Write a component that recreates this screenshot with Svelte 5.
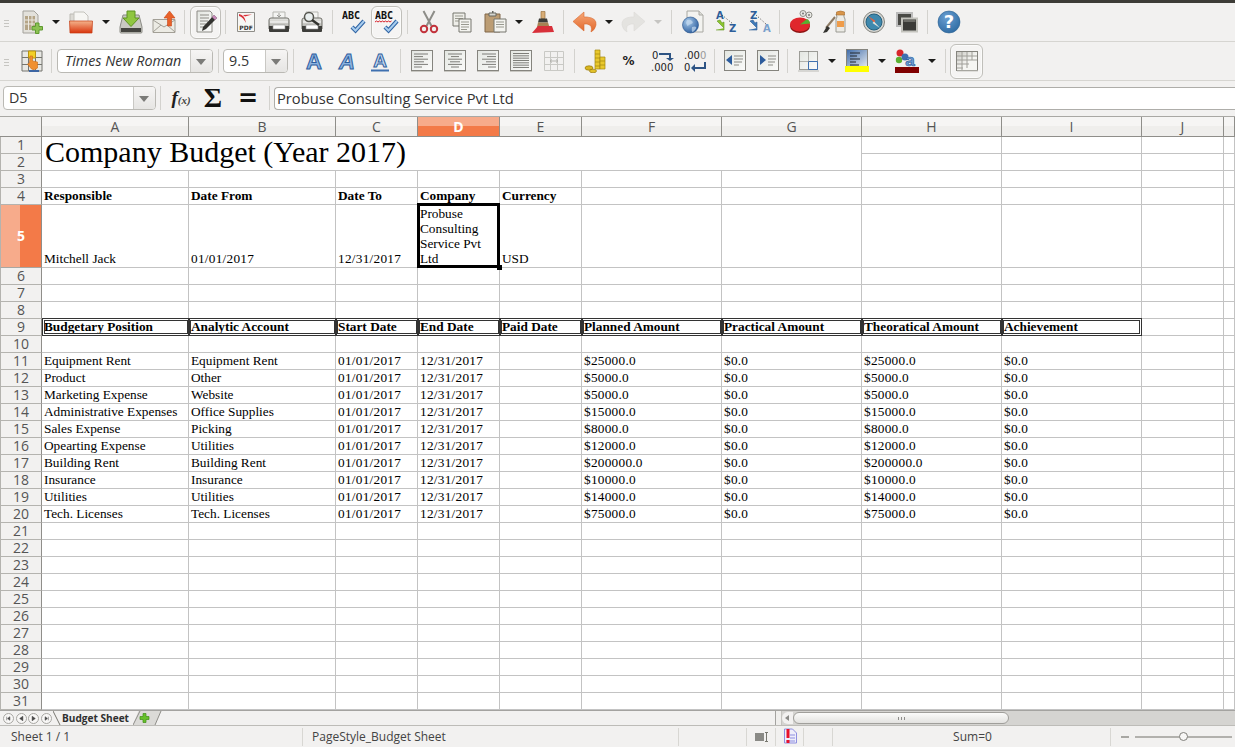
<script>
  const columns = ['A', 'B', 'C', 'D', 'E', 'F', 'G', 'H', 'I', 'J', ''];
  const rowCount = 31;

  const budget = [
    ['Equipment Rent', 'Equipment Rent', '$25000.0', '$25000.0'],
    ['Product', 'Other', '$5000.0', '$5000.0'],
    ['Marketing Expense', 'Website', '$5000.0', '$5000.0'],
    ['Administrative Expenses', 'Office Supplies', '$15000.0', '$15000.0'],
    ['Sales Expense', 'Picking', '$8000.0', '$8000.0'],
    ['Opearting Expense', 'Utilities', '$12000.0', '$12000.0'],
    ['Building Rent', 'Building Rent', '$200000.0', '$200000.0'],
    ['Insurance', 'Insurance', '$10000.0', '$10000.0'],
    ['Utilities', 'Utilities', '$14000.0', '$14000.0'],
    ['Tech. Licenses', 'Tech. Licenses', '$75000.0', '$75000.0']
  ];

  const cells = {
    4: ['Responsible', 'Date From', 'Date To', 'Company', 'Currency'],
    5: ['Mitchell Jack', '01/01/2017', '12/31/2017', 'Probuse Consulting Service Pvt Ltd', 'USD'],
    9: ['Budgetary Position', 'Analytic Account', 'Start Date', 'End Date', 'Paid Date', 'Planned Amount', 'Practical Amount', 'Theoratical Amount', 'Achievement']
  };
  budget.forEach((b, i) => {
    cells[11 + i] = [b[0], b[1], '01/01/2017', '12/31/2017', '', b[2], '$0.0', b[3], '$0.0'];
  });

  const rows = Array.from({ length: rowCount }, (_, i) => i + 1);

  // digits are hinted wider in the original, so numeric cells get a little tracking
  const isNumeric = (v) => /^[$\d][\d/.]*$/.test(v ?? '');

  const navIcons = ['M6.500 2.500v4l-2.500-2zM3 2.500v4', 'M6.500 2l-3.500 2.500 3.500 2.500z', 'M3.500 2l3.500 2.500-3.500 2.500z', 'M3.500 2.500v4l2.500-2zM7 2.500v4'];

  const alignLeft = [[4, 14], [4, 9], [4, 14], [4, 10], [4, 14], [4, 8]];
  const alignCenter = [[5, 14], [8, 8], [5, 14], [7, 10], [5, 14], [8, 8]];
  const alignRight = [[6, 14], [11, 9], [6, 14], [10, 10], [6, 14], [12, 8]];
  const alignFull = [[4, 16], [4, 16], [4, 16], [4, 16], [4, 16], [4, 16], [4, 16]];
</script>

{#snippet alignIcon(lines)}
  <svg width="24" height="24" viewBox="0 0 24 24">
    <rect x="1.500" y="1.500" width="21" height="20" fill="url(#pane)" stroke="#85847e" />
    <path d="M1 22.500h22" stroke="#c9c8c3" />
    {#each lines as l, i}
      <path d="M{l[0]} {lines.length > 6 ? 4.5 + i * 2.33 : 5 + i * 2.6}h{l[1]}" stroke="#7d7d78" />
    {/each}
  </svg>
{/snippet}

{#snippet printer()}
  <path d="M6 2h12v7H6z" fill="#f4f4f2" stroke="#b5b5b0" />
  <path d="M12 3v3M10 5l2 2 2-2" stroke="#9c9c98" fill="none" />
  <path d="M2 10q0-2 2-2h16q2 0 2 2v9H2z" fill="url(#metal)" stroke="#6f6f68" />
  <path d="M3 12h18" stroke="#fff" />
  <path d="M2 16h20v5q0 1-1 1H3q-1 0-1-1z" fill="#3d3d3a" />
  <path d="M6 15h12v4H6z" fill="#fff" stroke="#999" stroke-width=".6" />
{/snippet}

{#snippet abcMark(under)}
  <svg width="24" height="24" viewBox="0 0 24 24">
    <text x="0" y="9" class="abc">ABC</text>
    {#if under}
      <path d="M0 12l1.500-1 1.500 1 1.500-1 1.500 1 1.500-1 1.500 1 1.500-1 1.500 1 1.500-1 1.500 1 1.500-1" stroke="#d8202a" fill="none" />
    {/if}
    <path d="M10 17l3.500 3.500L22 11" stroke="#2f64a4" stroke-width="4.200" fill="none" />
    <path d="M10 17l3.500 3.500L22 11" stroke="#a9cdee" stroke-width="2" fill="none" />
  </svg>
{/snippet}

<svg class="defs" width="0" height="0" aria-hidden="true">
  <defs>
    <linearGradient id="pane" x1="0" y1="0" x2="1" y2="1"><stop offset="0" stop-color="#e3e6e1" /><stop offset="1" stop-color="#fbfbfa" /></linearGradient>
    <linearGradient id="metal" x1="0" y1="0" x2="0" y2="1"><stop offset="0" stop-color="#e6e6e3" /><stop offset="1" stop-color="#a9a9a4" /></linearGradient>
    <linearGradient id="folder" x1="0" y1="0" x2="0" y2="1"><stop offset="0" stop-color="#f4b48c" /><stop offset="1" stop-color="#d9330b" /></linearGradient>
    <linearGradient id="undo" x1="0" y1="0" x2="0" y2="1"><stop offset="0" stop-color="#f6a878" /><stop offset="1" stop-color="#e2672a" /></linearGradient>
    <linearGradient id="blueSheet" x1="0" y1="0" x2="1" y2="1"><stop offset="0" stop-color="#3d6aa8" /><stop offset="1" stop-color="#e8edf2" /></linearGradient>
    <linearGradient id="freeze" x1="0" y1="0" x2="1" y2="1"><stop offset="0" stop-color="#c9c8c2" /><stop offset=".55" stop-color="#f6f6f3" /></linearGradient>
    <radialGradient id="globe" cx=".35" cy=".3" r=".8"><stop offset="0" stop-color="#a9cbea" /><stop offset="1" stop-color="#24579a" /></radialGradient>
    <radialGradient id="help" cx=".4" cy=".3" r=".8"><stop offset="0" stop-color="#6a9fd2" /><stop offset="1" stop-color="#2a679f" /></radialGradient>
  </defs>
</svg>

<div class="app">
  <div class="topstrip"></div>

  <div class="toolbar">
    <span class="grip"></span>
    <span class="b">
      <svg width="24" height="24" viewBox="0 0 24 24">
        <path d="M3 1h11l4 4v18H3z" fill="#e3e1db" stroke="#a3a19b" />
        <path d="M5 6h10v14H5z" fill="#b5a587" />
        <path d="M5 10h10M5 14h10M8.500 6v14M12 6v14" stroke="#ece9e2" />
        <path d="M15.500 13h3.500v3.500h3.500V20H19v3.500h-3.500V20H12v-3.500h3.500z" fill="#8cc152" stroke="#5f9a30" />
      </svg>
    </span>
    <span class="arr w16"></span>
    <span class="b">
      <svg width="24" height="24" viewBox="0 0 24 24">
        <path d="M1 4h7l2 2v6H1z" fill="#dcdad4" stroke="#bcbab4" />
        <path d="M5 2h10l4 4v8H5z" fill="#f7f6f3" stroke="#c4c2bc" />
        <path d="M.5 11h23l-.5 12H1z" fill="url(#folder)" stroke="#c43c14" stroke-width=".7" />
      </svg>
    </span>
    <span class="arr w17"></span>
    <span class="b">
      <svg width="24" height="24" viewBox="0 0 24 24">
        <path d="M4 5h16l3 12v5q0 1-1 1H2q-1 0-1-1v-5z" fill="#c9c9c2" stroke="#8b8b85" />
        <path d="M2 18h20v4H2z" fill="#454541" />
        <path d="M8 1h8v7h4l-8 8.500L4 8h4z" fill="#8fc640" stroke="#5d9220" />
      </svg>
    </span>
    <span class="b">
      <svg width="24" height="24" viewBox="0 0 24 24">
        <path d="M1 9.500h22v13H1z" fill="#ecebe4" stroke="#a29f96" />
        <path d="M1 10l11 7 11-7M1 22l8-7M23 22l-8-7" stroke="#a29f96" fill="none" />
        <path d="M17.500 1l5.500 7h-3.500v8h-4V8H12z" fill="#e8622a" stroke="#c9471a" stroke-width=".6" />
      </svg>
    </span>
    <span class="sep w9"></span>
    <span class="b on">
      <svg width="24" height="24" viewBox="0 0 24 24">
        <path d="M3 1h13l2 2v19H3z" fill="url(#pane)" stroke="#8c8b85" />
        <path d="M6 5h9M6 8h9M6 11h8M6 14h6M6 17h4" stroke="#8c8b85" />
        <path d="M20 5l3 3-11 11-4 2 1-4z" fill="#33332f" />
        <path d="M20 5l3 3-2 2-3-3z" fill="#c788b8" />
      </svg>
    </span>
    <span class="sep w7"></span>
    <span class="b">
      <svg width="24" height="24" viewBox="0 0 24 24">
        <path d="M3.500 2.500h17v19h-17z" fill="#f7f7f5" stroke="#8e8d88" />
        <path d="M5 4q6 1 7 9-3-6-7-7zM9 5l9-.5-7 2z" fill="#d9323a" />
        <text x="12" y="19.500" class="pdf" text-anchor="middle">PDF</text>
      </svg>
    </span>
    <span class="b"><svg width="24" height="24" viewBox="0 0 24 24">{@render printer()}</svg></span>
    <span class="b">
      <svg width="24" height="24" viewBox="0 0 24 24">
        {@render printer()}
        <circle cx="9" cy="7" r="4.500" fill="#e9eeee" stroke="#55554f" stroke-width="1.500" />
        <path d="M12 10l7 5" stroke="#33332f" stroke-width="2.500" />
      </svg>
    </span>
    <span class="sep w9"></span>
    <span class="b">{@render abcMark(false)}</span>
    <span class="b on">{@render abcMark(true)}</span>
    <span class="sep w9"></span>
    <span class="b">
      <svg width="24" height="24" viewBox="0 0 24 24">
        <path d="M6.500 1l8 15M17.500 1l-8 15" stroke="#8d8d88" stroke-width="2" />
        <circle cx="7" cy="19" r="3.200" fill="none" stroke="#c2333c" stroke-width="2" />
        <circle cx="17" cy="19" r="3.200" fill="none" stroke="#c2333c" stroke-width="2" />
      </svg>
    </span>
    <span class="b">
      <svg width="24" height="24" viewBox="0 0 24 24">
        <path d="M3 3h12v13H3z" fill="#eeeee9" stroke="#77776f" />
        <path d="M5 6h8M5 8.500h8M5 11h8" stroke="#99998f" />
        <path d="M9 9h12v13H9z" fill="#f4f4f0" stroke="#77776f" />
        <path d="M11 12h8M11 14.500h8M11 17h8M11 19.500h6" stroke="#99998f" />
      </svg>
    </span>
    <span class="b">
      <svg width="24" height="24" viewBox="0 0 24 24">
        <path d="M2 4h15v18H2z" fill="#bc9d74" stroke="#806648" />
        <path d="M6 3h7v3H6z" fill="#d6d6d0" stroke="#66665f" />
        <path d="M9 1h1.500v2H9z" fill="#66665f" />
        <path d="M11 9h12v13H11z" fill="#f4f4f0" stroke="#77776f" />
        <path d="M13 12h8M13 14.500h8M13 17h8" stroke="#99998f" />
      </svg>
    </span>
    <span class="arr w15"></span>
    <span class="b">
      <svg width="24" height="24" viewBox="0 0 24 24">
        <path d="M10 1.500h4v7h-4z" fill="#d8ad76" stroke="#9b7444" stroke-width=".7" />
        <path d="M8 8.500h8l1 4H7z" fill="#3c3c38" />
        <path d="M7 12.500h10l3 9H5z" fill="#a78253" />
        <path d="M1 23l6-7h14l2 6z" fill="#d8303a" />
      </svg>
    </span>
    <span class="sep w9"></span>
    <span class="b">
      <svg width="24" height="24" viewBox="0 0 24 24">
        <path d="M0 11.500L11 2v5h3q10 1 9 8-1 5-5 7 2-7-4-8h-3v7z" fill="url(#undo)" stroke="#d96a30" stroke-width=".6" />
      </svg>
    </span>
    <span class="arr w15"></span>
    <span class="b">
      <svg width="24" height="24" viewBox="0 0 24 24">
        <path d="M24 11.500L13 2v5h-3Q0 8 1 15q1 5 5 7-2-7 4-8h3v7z" fill="#e4e3e0" stroke="#dbdad7" stroke-width=".6" />
      </svg>
    </span>
    <span class="arr w18 off"></span>
    <span class="sep w9"></span>
    <span class="b">
      <svg width="24" height="24" viewBox="0 0 24 24">
        <path d="M6 1h12l4 4v17H6z" fill="#f3f3f0" stroke="#a8a8a2" />
        <path d="M18 1v4h4" fill="#dcdcd7" stroke="#a8a8a2" />
        <circle cx="9.500" cy="15" r="8" fill="url(#globe)" stroke="#27538b" stroke-width=".6" />
        <path d="M6 10q3-1 5 1t-1 3-3 2-2-3zM11 17q3-1 4 0t-2 4-2-4z" fill="#c7dcef" opacity=".7" />
      </svg>
    </span>
    <span class="b">
      <svg width="24" height="24" viewBox="0 0 24 24">
        <text x="2" y="9" class="sortb">A</text>
        <text x="15" y="22" class="sortb">Z</text>
        <path d="M8 5l11 9" stroke="#3e3e3a" stroke-dasharray="1 2" />
        <path d="M3 11l7 7v-6l-2 1-2-3zM2 20h8v-2" fill="#8cc52f" stroke="#5f9320" stroke-width=".6" />
      </svg>
    </span>
    <span class="b">
      <svg width="24" height="24" viewBox="0 0 24 24">
        <text x="3" y="9" class="sortb">Z</text>
        <text x="16" y="22" class="sortb light">A</text>
        <path d="M9 5l10 9" stroke="#3e3e3a" stroke-dasharray="1 2" />
        <path d="M3 11l7 7v-6l-2 1-2-3zM2 20h8v-2" fill="#3f7ab8" stroke="#2b5c94" stroke-width=".6" />
      </svg>
    </span>
    <span class="sep w9"></span>
    <span class="b">
      <svg width="24" height="24" viewBox="0 0 24 24">
        <ellipse cx="11" cy="16" rx="10" ry="7" fill="#8e1414" />
        <ellipse cx="11" cy="14.500" rx="10" ry="7" fill="#e0262c" />
        <path d="M11 14.500l10-1q0-3-3-4.500z" fill="#58b030" />
        <circle cx="14" cy="3.500" r="3" fill="#e8e8e4" stroke="#8e8e88" />
        <circle cx="20" cy="5" r="3" fill="#e8e8e4" stroke="#8e8e88" />
        <circle cx="14" cy="3.500" r="1" fill="#777" /><circle cx="20" cy="5" r="1" fill="#777" />
      </svg>
    </span>
    <span class="b">
      <svg width="24" height="24" viewBox="0 0 24 24">
        <path d="M14 4h8v3l1 2v13h-9V9l1-2z" fill="#ecebe6" stroke="#9a9a93" />
        <path d="M14.500 2q4-2 8 0v3h-8z" fill="#d8954a" stroke="#a66b2c" stroke-width=".6" />
        <path d="M15 11h7v6h-7z" fill="#ef9c4a" />
        <path d="M13 7L4 18" stroke="#8c7a63" stroke-width="2" />
        <path d="M5 16l3 2-3 4-4 1z" fill="#33332f" />
      </svg>
    </span>
    <span class="sep w7"></span>
    <span class="b">
      <svg width="24" height="24" viewBox="0 0 24 24">
        <circle cx="12" cy="12" r="10.500" fill="#d4d4d0" stroke="#85857f" />
        <circle cx="12" cy="12" r="8" fill="#3f88ad" stroke="#25607e" />
        <path d="M6 6l7.500 5-1.500 1.500z" fill="#e95f3a" />
        <path d="M18 18l-7.500-5 1.500-1.500z" fill="#e3e3de" />
      </svg>
    </span>
    <span class="b">
      <svg width="24" height="24" viewBox="0 0 24 24">
        <path d="M2 3h15v13H2z" fill="#4a4a46" stroke="#bbb" stroke-width="2" />
        <path d="M7 8.500h15v13H7z" fill="#3b3b38" stroke="#c4c4be" stroke-width="2" />
        <path d="M8.500 10h12v2H8.500z" fill="#6d6d68" />
      </svg>
    </span>
    <span class="sep w9"></span>
    <span class="b">
      <svg width="24" height="24" viewBox="0 0 24 24">
        <circle cx="12" cy="12" r="11" fill="url(#help)" stroke="#2b6292" stroke-width=".6" />
        <text x="12" y="18" class="helpq" text-anchor="middle">?</text>
      </svg>
    </span>
  </div>

  <div class="toolbar second">
    <span class="grip"></span>
    <span class="b">
      <svg width="24" height="24" viewBox="0 0 24 24">
        <path d="M2 2h20v20H2z" fill="#e8e8e4" stroke="#75756f" />
        <path d="M2 8.500h20M2 15.500h20M8.500 2v20M15.500 2v20" stroke="#75756f" />
        <path d="M8.500 2h7v7h-7z" fill="#f2cf27" stroke="#b8930f" />
        <path d="M10 7h2.500v5l5 1v6q-3 3-6 1l-4-5 2-1z" fill="#f09030" stroke="#cc6c12" stroke-width=".6" />
        <path d="M9 21h10v2H9z" fill="#3d66a3" />
      </svg>
    </span>
    <span class="sep w7"></span>
    <span class="combo font">
      <span class="combo-value">Times New Roman</span>
      <span class="combo-btn"></span>
    </span>
    <span class="sep w6"></span>
    <span class="combo size">
      <span class="combo-value plain">9.5</span>
      <span class="combo-btn"></span>
    </span>
    <span class="sep w7"></span>
    <span class="b"><svg width="24" height="24" viewBox="0 0 24 24"><text x="12" y="20" class="fa" text-anchor="middle">A</text></svg></span>
    <span class="b"><svg width="24" height="24" viewBox="0 0 24 24"><text x="12" y="20" class="fa it" text-anchor="middle">A</text></svg></span>
    <span class="b">
      <svg width="24" height="24" viewBox="0 0 24 24">
        <text x="12" y="18" class="fa thin" text-anchor="middle">A</text>
        <path d="M3 21.500h18" stroke="#3f70b0" stroke-width="2" />
      </svg>
    </span>
    <span class="sep w9"></span>
    <span class="b">{@render alignIcon(alignLeft)}</span>
    <span class="b">{@render alignIcon(alignCenter)}</span>
    <span class="b">{@render alignIcon(alignRight)}</span>
    <span class="b">{@render alignIcon(alignFull)}</span>
    <span class="b">
      <svg width="24" height="24" viewBox="0 0 24 24">
        <path d="M2.500 2.500h19v19h-19z" fill="#f2f1f0" stroke="#c9c9c5" />
        <path d="M2.500 8.500h19M2.500 15.500h19M8.500 2.500v19M15.500 2.500v19" stroke="#c9c9c5" />
        <path d="M8 12h8M8 12l2-1.500M8 12l2 1.500M16 12l-2-1.500M16 12l-2 1.500" stroke="#b5b5b0" fill="none" />
      </svg>
    </span>
    <span class="sep w9"></span>
    <span class="b">
      <svg width="24" height="24" viewBox="0 0 24 24">
        <ellipse cx="5" cy="19" rx="4" ry="2.200" fill="#d9b61e" stroke="#96790f" stroke-width=".7" />
        <ellipse cx="9" cy="22" rx="3.500" ry="1.800" fill="#e2c12a" stroke="#96790f" stroke-width=".7" />
        <path d="M11 1h5v19h-5z" fill="#e9c82d" stroke="#a3860f" stroke-width=".7" />
        <path d="M16 8h5v12h-5z" fill="#e9c82d" stroke="#a3860f" stroke-width=".7" />
        <path d="M11 5h5M11 9h5M11 13h5M11 17h5M16 12h5M16 16h5" stroke="#a3860f" stroke-width=".7" />
      </svg>
    </span>
    <span class="b"><span class="pct">%</span></span>
    <span class="b">
      <svg width="24" height="24" viewBox="0 0 24 24">
        <text x="2" y="10" class="num">0</text>
        <text x="1" y="22" class="num">.000</text>
        <path d="M9 5h11v5" stroke="#2e5484" stroke-width="2" fill="none" />
        <path d="M16 9h8l-4 3z" fill="#2e5484" />
      </svg>
    </span>
    <span class="b">
      <svg width="24" height="24" viewBox="0 0 24 24">
        <text x="1" y="10" class="num">.00<tspan fill="#999">0</tspan></text>
        <text x="1" y="22" class="num">0</text>
        <path d="M22 13v6H11" stroke="#2e5484" stroke-width="2" fill="none" />
        <path d="M12 15v8l-4-4z" fill="#2e5484" />
      </svg>
    </span>
    <span class="sep w7"></span>
    <span class="b">
      <svg width="24" height="24" viewBox="0 0 24 24">
        <rect x="1.500" y="1.500" width="21" height="20" fill="url(#pane)" stroke="#85847e" />
        <path d="M9 6L3 11l6 5z" fill="#2c5c9c" />
        <path d="M11 7h9M11 10h9M11 13h8M11 16h5" stroke="#8b8b85" />
      </svg>
    </span>
    <span class="b">
      <svg width="24" height="24" viewBox="0 0 24 24">
        <rect x="1.500" y="1.500" width="21" height="20" fill="url(#pane)" stroke="#85847e" />
        <path d="M4 6l6 5-6 5z" fill="#2c5c9c" />
        <path d="M12 7h8M12 10h8M12 13h7M12 16h5" stroke="#8b8b85" />
      </svg>
    </span>
    <span class="sep w7"></span>
    <span class="b">
      <svg width="24" height="24" viewBox="0 0 24 24">
        <rect x="3.500" y="2.500" width="18" height="18" fill="url(#pane)" stroke="#9c9c97" />
        <path d="M12.500 12.500h9v8h-9z" fill="none" stroke="#3f70b0" />
        <path d="M3.500 12.500h9M12.500 2.500v10" stroke="#75756f" stroke-dasharray="1 1" />
        <path d="M2 22h21" stroke="#bbbbb6" />
      </svg>
    </span>
    <span class="arr w16"></span>
    <span class="b">
      <svg width="24" height="24" viewBox="0 0 24 24">
        <rect x="1.500" y="0.500" width="21" height="18" fill="url(#blueSheet)" stroke="#85847e" />
        <path d="M5 4h10M5 7h7M5 10h10M5 13h6M5 16h9" stroke="#22262c" />
        <path d="M0 17h24v6H0z" fill="#ffff00" />
      </svg>
    </span>
    <span class="arr w17"></span>
    <span class="b">
      <svg width="24" height="24" viewBox="0 0 24 24">
        <circle cx="5" cy="4" r="3.500" fill="#d8262c" />
        <circle cx="4" cy="11" r="3.200" fill="#5cb030" />
        <circle cx="10" cy="8" r="3.500" fill="#3f70b0" />
        <text x="15" y="17" class="fc" text-anchor="middle">a</text>
        <path d="M0 18h24v6H0z" fill="#800000" />
      </svg>
    </span>
    <span class="arr w17"></span>
    <span class="sep w10"></span>
    <span class="b on big">
      <svg width="24" height="24" viewBox="0 0 24 24">
        <rect x="1.500" y="2.500" width="21" height="19" fill="url(#freeze)" stroke="#85847e" />
        <path d="M2 7h20M2 11h20M2 15h12M2 19h6M7 3v18M12 3v16M17 3v8" stroke="#a09f99" />
        <path d="M2 22h21" stroke="#c9c8c3" />
      </svg>
    </span>
  </div>

  <div class="formula">
    <span class="combo name">
      <span class="combo-value plain">D5</span>
      <span class="combo-btn"></span>
    </span>
    <span class="sep w9"></span>
    <span class="fx"><i>f</i><small>(x)</small></span>
    <span class="sigma">Σ</span>
    <span class="equals">=</span>
    <span class="sep w9"></span>
    <div class="input">Probuse Consulting Service Pvt Ltd</div>
  </div>

  <div class="sheet">
    <div class="corner"></div>
    {#each columns as c}
      <div class="colhead" class:active={c === 'D'}>{c}</div>
    {/each}

    {#each rows as r}
      <div class="rowhead" class:active={r === 5}>{r}</div>
      {#if r === 1}
        <div class="cell merged">Company Budget (Year 2017)</div>
      {/if}
      {#each columns as c, i}
        {#if !(r <= 2 && i < 7)}
          <div
            class="cell"
            class:head={r === 4 || r === 9}
            class:boxed={r === 9 && i < 9}
            class:first={i === 0}
            class:last={i === 8}
            class:wrap={r === 5 && i === 3}
            class:selected={r === 5 && i === 3}
            class:numeric={isNumeric(cells[r]?.[i])}
          >{cells[r]?.[i] ?? ''}</div>
        {/if}
      {/each}
    {/each}
  </div>

  <div class="tabbar">
    <div class="tabnav">
      {#each navIcons as d}
        <span class="nav">
          <svg width="10" height="9" viewBox="0 0 10 9"><path {d} fill="#444" stroke="#444" stroke-width=".6" /></svg>
        </span>
      {/each}
    </div>
    <div class="tab">
      <svg class="slash" width="8" height="14" viewBox="0 0 8 14"><path d="M0 0l7 14" stroke="#77766f" fill="none" /></svg>
      <span>Budget Sheet</span>
    </div>
    <svg class="addtab" width="29" height="14" viewBox="0 0 29 14">
      <path d="M5.500 0H28l-6 14H0z" fill="#dbdad7" />
      <path d="M7 0L0 14M28 0l-6 14" stroke="#8e8d88" fill="none" />
      <path d="M10 2.500h3v3h3v3h-3v3h-3v-3H7v-3h3z" fill="#66c02a" stroke="#3f8e16" stroke-width=".7" />
    </svg>
    <div class="tabfill"></div>
    <div class="splitter"></div>
    <div class="hscroll">
      <span class="scroll-left"></span>
      <div class="thumb"><span></span></div>
    </div>
  </div>

  <div class="status">
    <div class="st st1">Sheet 1 / 1</div>
    <div class="st st2">PageStyle_Budget Sheet</div>
    <div class="st st3"></div>
    <div class="st st4">
      <svg width="14" height="12" viewBox="0 0 14 12">
        <path d="M0 2h9v8H0z" fill="#8a8a86" />
        <path d="M10 1.500h3M11.500 1.500v9M10 10.500h3" stroke="#77776f" fill="none" />
      </svg>
    </div>
    <div class="st st5">
      <svg width="15" height="17" viewBox="0 0 15 17">
        <path d="M1.500 1h8l4 4v10h-12z" fill="#eeeefa" stroke="#8e8ee0" />
        <path d="M7 7h5M7 10h5M3 13h9" stroke="#8e8ee0" />
        <path d="M3.500 1h3v9h-3zM3.500 12h3v3h-3z" fill="#e8102a" />
      </svg>
    </div>
    <div class="st st6"></div>
    <div class="st st7">Sum=0</div>
    <div class="st st8">
      <span class="minus"></span>
      <span class="slider"><span class="knob"></span></span>
    </div>
  </div>
</div>

<style>
  :global(body) {
    margin: 0;
    background: #f2f1f0;
    overflow: hidden;
  }

  .defs {
    position: absolute;
  }

  .app {
    width: 1235px;
    height: 747px;
    display: flex;
    flex-direction: column;
    overflow: hidden;
    background: #f2f1f0;
    font-family: "Open Sans", "Noto Sans", sans-serif;
    color: #3c3c3c;
  }

  .topstrip {
    height: 3px;
    background: #3d3c37;
    flex: none;
  }

  .toolbar {
    height: 38px;
    flex: none;
    display: flex;
    align-items: center;
    padding-left: 15px;
    border-bottom: 1px solid #d6d5d1;
    position: relative;
  }

  .grip {
    position: absolute;
    left: 4px;
    top: 17px;
    width: 5px;
    height: 7px;
    background: repeating-linear-gradient(#c6c5c1 0 1px, transparent 1px 3px);
  }

  .b {
    width: 33px;
    height: 33px;
    flex: none;
    display: flex;
    align-items: center;
    justify-content: center;
    box-sizing: border-box;
  }

  .b svg {
    display: block;
  }

  .b.on {
    width: 31px;
    margin: 0 1px;
    border: 1px solid #c0bfba;
    border-radius: 6px;
    background: #f5f4f3;
    box-shadow: inset 0 0 0 1px #fbfbfa;
  }

  .b.on.big {
    width: 33px;
    height: 35px;
    margin: 0;
  }

  .arr {
    flex: none;
    height: 10px;
    position: relative;
  }

  .arr::after {
    content: "";
    position: absolute;
    left: 50%;
    top: 3px;
    margin-left: -4px;
    border: 4px solid transparent;
    border-top-color: #1c1c1a;
    border-bottom: 0;
  }

  .arr.off::after {
    border-top-color: #c6c5c2;
  }

  .w15 { width: 15px; }
  .w16 { width: 16px; }
  .w17 { width: 17px; }
  .w18 { width: 18px; }

  .sep {
    flex: none;
    height: 24px;
    display: flex;
    justify-content: center;
  }

  .sep::before {
    content: "";
    width: 1px;
    background: #d3d2ce;
  }

  .w6 { width: 6px; }
  .w7 { width: 7px; }
  .w9 { width: 9px; }
  .w10 { width: 10px; }

  .combo {
    flex: none;
    height: 24px;
    box-sizing: border-box;
    display: flex;
    background: #fff;
    border: 1px solid #bab9b4;
    border-radius: 4px;
    overflow: hidden;
  }

  .combo.font {
    width: 156px;
    margin: 0 2px;
  }

  .combo.size {
    width: 65px;
    margin: 0 2px;
  }

  .combo.name {
    width: 153px;
    margin-left: 3px;
  }

  .combo-value {
    flex: 1;
    padding-left: 7px;
    font-size: 14.300px;
    line-height: 22px;
    font-style: italic;
    color: #333;
    white-space: nowrap;
  }

  .combo-value.plain {
    font-style: normal;
    padding-left: 5px;
  }

  .combo-btn {
    width: 21px;
    flex: none;
    border-left: 1px solid #c9c8c4;
    background: linear-gradient(#f6f5f4, #e6e5e3);
    position: relative;
  }

  .combo-btn::after {
    content: "";
    position: absolute;
    left: 5px;
    top: 9px;
    border: 5px solid transparent;
    border-top: 6px solid #7b7b78;
    border-bottom: 0;
  }

  .formula {
    height: 35px;
    flex: none;
    display: flex;
    align-items: center;
    padding-bottom: 1px;
    box-sizing: border-box;
  }

  .fx {
    width: 28px;
    margin-left: 2px;
    text-align: center;
    font-family: "Liberation Serif", serif;
    color: #1e1e1e;
  }

  .fx i {
    font-size: 19px;
    font-weight: 700;
  }

  .fx small {
    font-size: 11px;
    font-style: italic;
    font-weight: 700;
    color: #444;
  }

  .sigma {
    width: 36px;
    text-align: center;
    font-family: "Liberation Serif", serif;
    font-size: 28px;
    line-height: 24px;
    font-weight: 700;
    color: #111;
  }

  .equals {
    width: 34px;
    text-align: center;
    font-family: "DejaVu Sans", sans-serif;
    font-size: 24px;
    line-height: 24px;
    font-weight: 700;
    color: #111;
  }

  .input {
    flex: 1;
    height: 23px;
    box-sizing: border-box;
    background: #fff;
    border: 1px solid #aeada9;
    border-right: 0;
    border-radius: 4px 0 0 4px;
    padding-left: 2px;
    font-size: 14.700px;
    line-height: 21px;
    color: #333;
  }

  .sheet {
    flex: none;
    height: 594px;
    display: grid;
    grid-template-columns: 42px 147px 147px 82px 82px 82px 140px 140px 140px 140px 82px 1fr;
    grid-template-rows: 20px repeat(4, 17px) 63px repeat(26, 17px);
    background: #fff;
    overflow: hidden;
    border-top: 1px solid #a9a8a4;
    box-sizing: border-box;
    font-family: "Liberation Serif", serif;
    font-size: 13.300px;
    color: #000;
  }

  .corner,
  .colhead,
  .rowhead {
    font-family: "Open Sans", "Noto Sans", sans-serif;
    font-size: 14px;
    color: #555;
    background: #f2f1f0;
    box-sizing: border-box;
    display: flex;
    align-items: center;
    justify-content: center;
    line-height: 1;
  }

  .corner {
    border-right: 1px solid #8f8e8a;
    border-bottom: 1px solid #8f8e8a;
  }

  .colhead {
    border-right: 1px solid #8f8e8a;
    border-bottom: 1px solid #8f8e8a;
    background: linear-gradient(#f6f5f4 0 50%, #efeeec 50%);
  }

  .colhead.active {
    background: linear-gradient(#f7ab8b 0 45%, #f37a48 45%);
    color: #fff;
    font-weight: 700;
  }

  .rowhead {
    border-right: 1px solid #8f8e8a;
    border-bottom: 1px solid #b4b3af;
    border-left: 1px solid #b4b3af;
  }

  .rowhead.active {
    background: linear-gradient(90deg, #f7ab8b 0 48%, #f37a48 48%);
    color: #fff;
    font-weight: 700;
    border-bottom-color: #a8a7a3;
  }

  .cell {
    box-sizing: border-box;
    border-right: 1px solid #c3c3c3;
    border-bottom: 1px solid #c3c3c3;
    padding: 0 2px 1px;
    display: flex;
    align-items: flex-end;
    line-height: 15px;
    white-space: nowrap;
    min-width: 0;
    position: relative;
  }

  .numeric {
    letter-spacing: 0.25px;
  }

  .merged {
    grid-column: 2 / span 7;
    grid-row: 2 / span 2;
    font-size: 30px;
    line-height: 32px;
    padding-left: 3px;
    padding-bottom: 2px;
  }

  .head {
    font-weight: 700;
  }

  .boxed::after {
    content: "";
    position: absolute;
    inset: -1px -2px -1px -1px;
    border: 3px double #333;
    pointer-events: none;
  }

  .boxed.first::after {
    left: 0;
  }

  .boxed.last::after {
    right: -1px;
  }

  .wrap {
    white-space: normal;
  }

  .selected::after {
    content: "";
    position: absolute;
    top: -2px;
    left: -1px;
    right: -1px;
    bottom: -1px;
    border: 3px solid #000;
    z-index: 2;
  }

  .selected::before {
    content: "";
    position: absolute;
    right: -3px;
    bottom: -3px;
    width: 5px;
    height: 5px;
    background: #000;
    z-index: 3;
  }

  .tabbar {
    height: 14px;
    flex: none;
    display: flex;
    align-items: stretch;
    background: #f2f1f0;
    border-top: 1px solid #a4a3a0;
    border-bottom: 1px solid #bdbcb8;
  }

  .tabnav {
    width: 53px;
    padding-left: 3px;
    display: flex;
    align-items: center;
    flex: none;
    box-sizing: border-box;
  }

  .nav {
    width: 11px;
    height: 11px;
    margin-right: 1.700px;
    flex: none;
    box-sizing: border-box;
    border: 1px solid #a8a7a3;
    border-radius: 50%;
    background: #f8f7f6;
    display: flex;
    align-items: center;
    justify-content: center;
  }

  .tab {
    width: 80px;
    flex: none;
    display: flex;
    font-size: 10.100px;
    font-weight: 700;
    line-height: 14px;
    color: #2f2f2f;
    white-space: nowrap;
  }

  .slash {
    flex: none;
    margin-right: 1px;
  }

  .addtab {
    flex: none;
    display: block;
  }

  .tabfill {
    flex: 1;
  }

  .splitter {
    width: 7px;
    flex: none;
    border-left: 1px solid #a4a3a0;
    border-right: 1px solid #c4c3bf;
    box-sizing: border-box;
    background: #efeeec;
  }

  .hscroll {
    width: 453px;
    flex: none;
    display: flex;
    align-items: center;
    background: #d5d4d1;
    box-sizing: border-box;
  }

  .scroll-left {
    width: 11px;
    height: 12px;
    flex: none;
    position: relative;
    background: #f2f1f0;
    border-radius: 6px 0 0 6px;
  }

  .scroll-left::after {
    content: "";
    position: absolute;
    left: 3px;
    top: 3px;
    border: 3px solid transparent;
    border-right: 4px solid #8a8a87;
    border-left: 0;
  }

  .thumb {
    width: 216px;
    height: 12px;
    box-sizing: border-box;
    border: 1px solid #a09f9b;
    border-radius: 6px;
    background: linear-gradient(#fbfbfa, #e3e2e0);
    display: flex;
    align-items: center;
    justify-content: center;
  }

  .thumb span {
    width: 7px;
    height: 3px;
    background: repeating-linear-gradient(90deg, #8e8d8a 0 1px, transparent 1px 3px);
  }

  .status {
    flex: 1;
    display: flex;
    align-items: center;
    font-size: 12px;
    color: #444;
    white-space: nowrap;
  }

  .st {
    height: 18px;
    line-height: 18px;
    box-sizing: border-box;
    border-right: 1px solid #d8d7d3;
    flex: none;
    display: flex;
    align-items: center;
  }

  .st1 { width: 303px; padding-left: 11px; }
  .st2 { width: 376px; padding-left: 9px; }
  .st3 { width: 68px; }
  .st4 { width: 29px; padding-left: 8px; }
  .st5 { width: 28px; padding-left: 7px; }
  .st6 { width: 29px; }
  .st7 { width: 278px; justify-content: center; padding-left: 2px; }
  .st8 { flex: 1; border-right: 0; padding-left: 10px; }

  .minus {
    width: 8px;
    height: 2px;
    background: #a8a7a3;
    flex: none;
  }

  .slider {
    width: 97px;
    height: 2px;
    margin-left: 6px;
    background: #b2b1ad;
    flex: none;
    display: flex;
    align-items: center;
    padding-left: 44px;
    box-sizing: border-box;
  }

  .knob {
    width: 9px;
    height: 9px;
    box-sizing: border-box;
    border: 1px solid #807f7b;
    border-radius: 50%;
    background: #f8f7f6;
    flex: none;
  }

  text {
    font-family: "Liberation Sans", sans-serif;
  }

  .abc {
    font-family: "DejaVu Sans Mono", monospace;
    font-size: 10px;
    font-weight: 700;
    fill: #111;
  }

  .pdf {
    font-family: "DejaVu Sans", sans-serif;
    font-size: 6px;
    font-weight: 700;
    fill: #333;
  }

  .sortb {
    font-family: "DejaVu Sans", sans-serif;
    font-size: 10px;
    font-weight: 700;
    fill: #2e5f9a;
  }

  .sortb.light {
    fill: #79a0cc;
  }

  .helpq {
    font-family: "DejaVu Sans", sans-serif;
    font-size: 18px;
    font-weight: 700;
    fill: #fff;
  }

  .fa {
    font-size: 22px;
    font-weight: 700;
    fill: #8db4e0;
    stroke: #2e5e9e;
    stroke-width: 1;
  }

  .fa.it {
    font-style: italic;
  }

  .fa.thin {
    font-size: 19px;
    fill: #c5d8ee;
  }

  .pct {
    font-family: "DejaVu Sans", sans-serif;
    font-size: 12px;
    font-weight: 700;
    color: #222;
  }

  .num {
    font-family: "DejaVu Sans", sans-serif;
    font-size: 10px;
    font-weight: 400;
    fill: #222;
  }

  .fc {
    font-size: 17px;
    font-weight: 700;
    fill: #6f9fd4;
    stroke: #2e5e9e;
    stroke-width: 0.7;
  }
</style>
